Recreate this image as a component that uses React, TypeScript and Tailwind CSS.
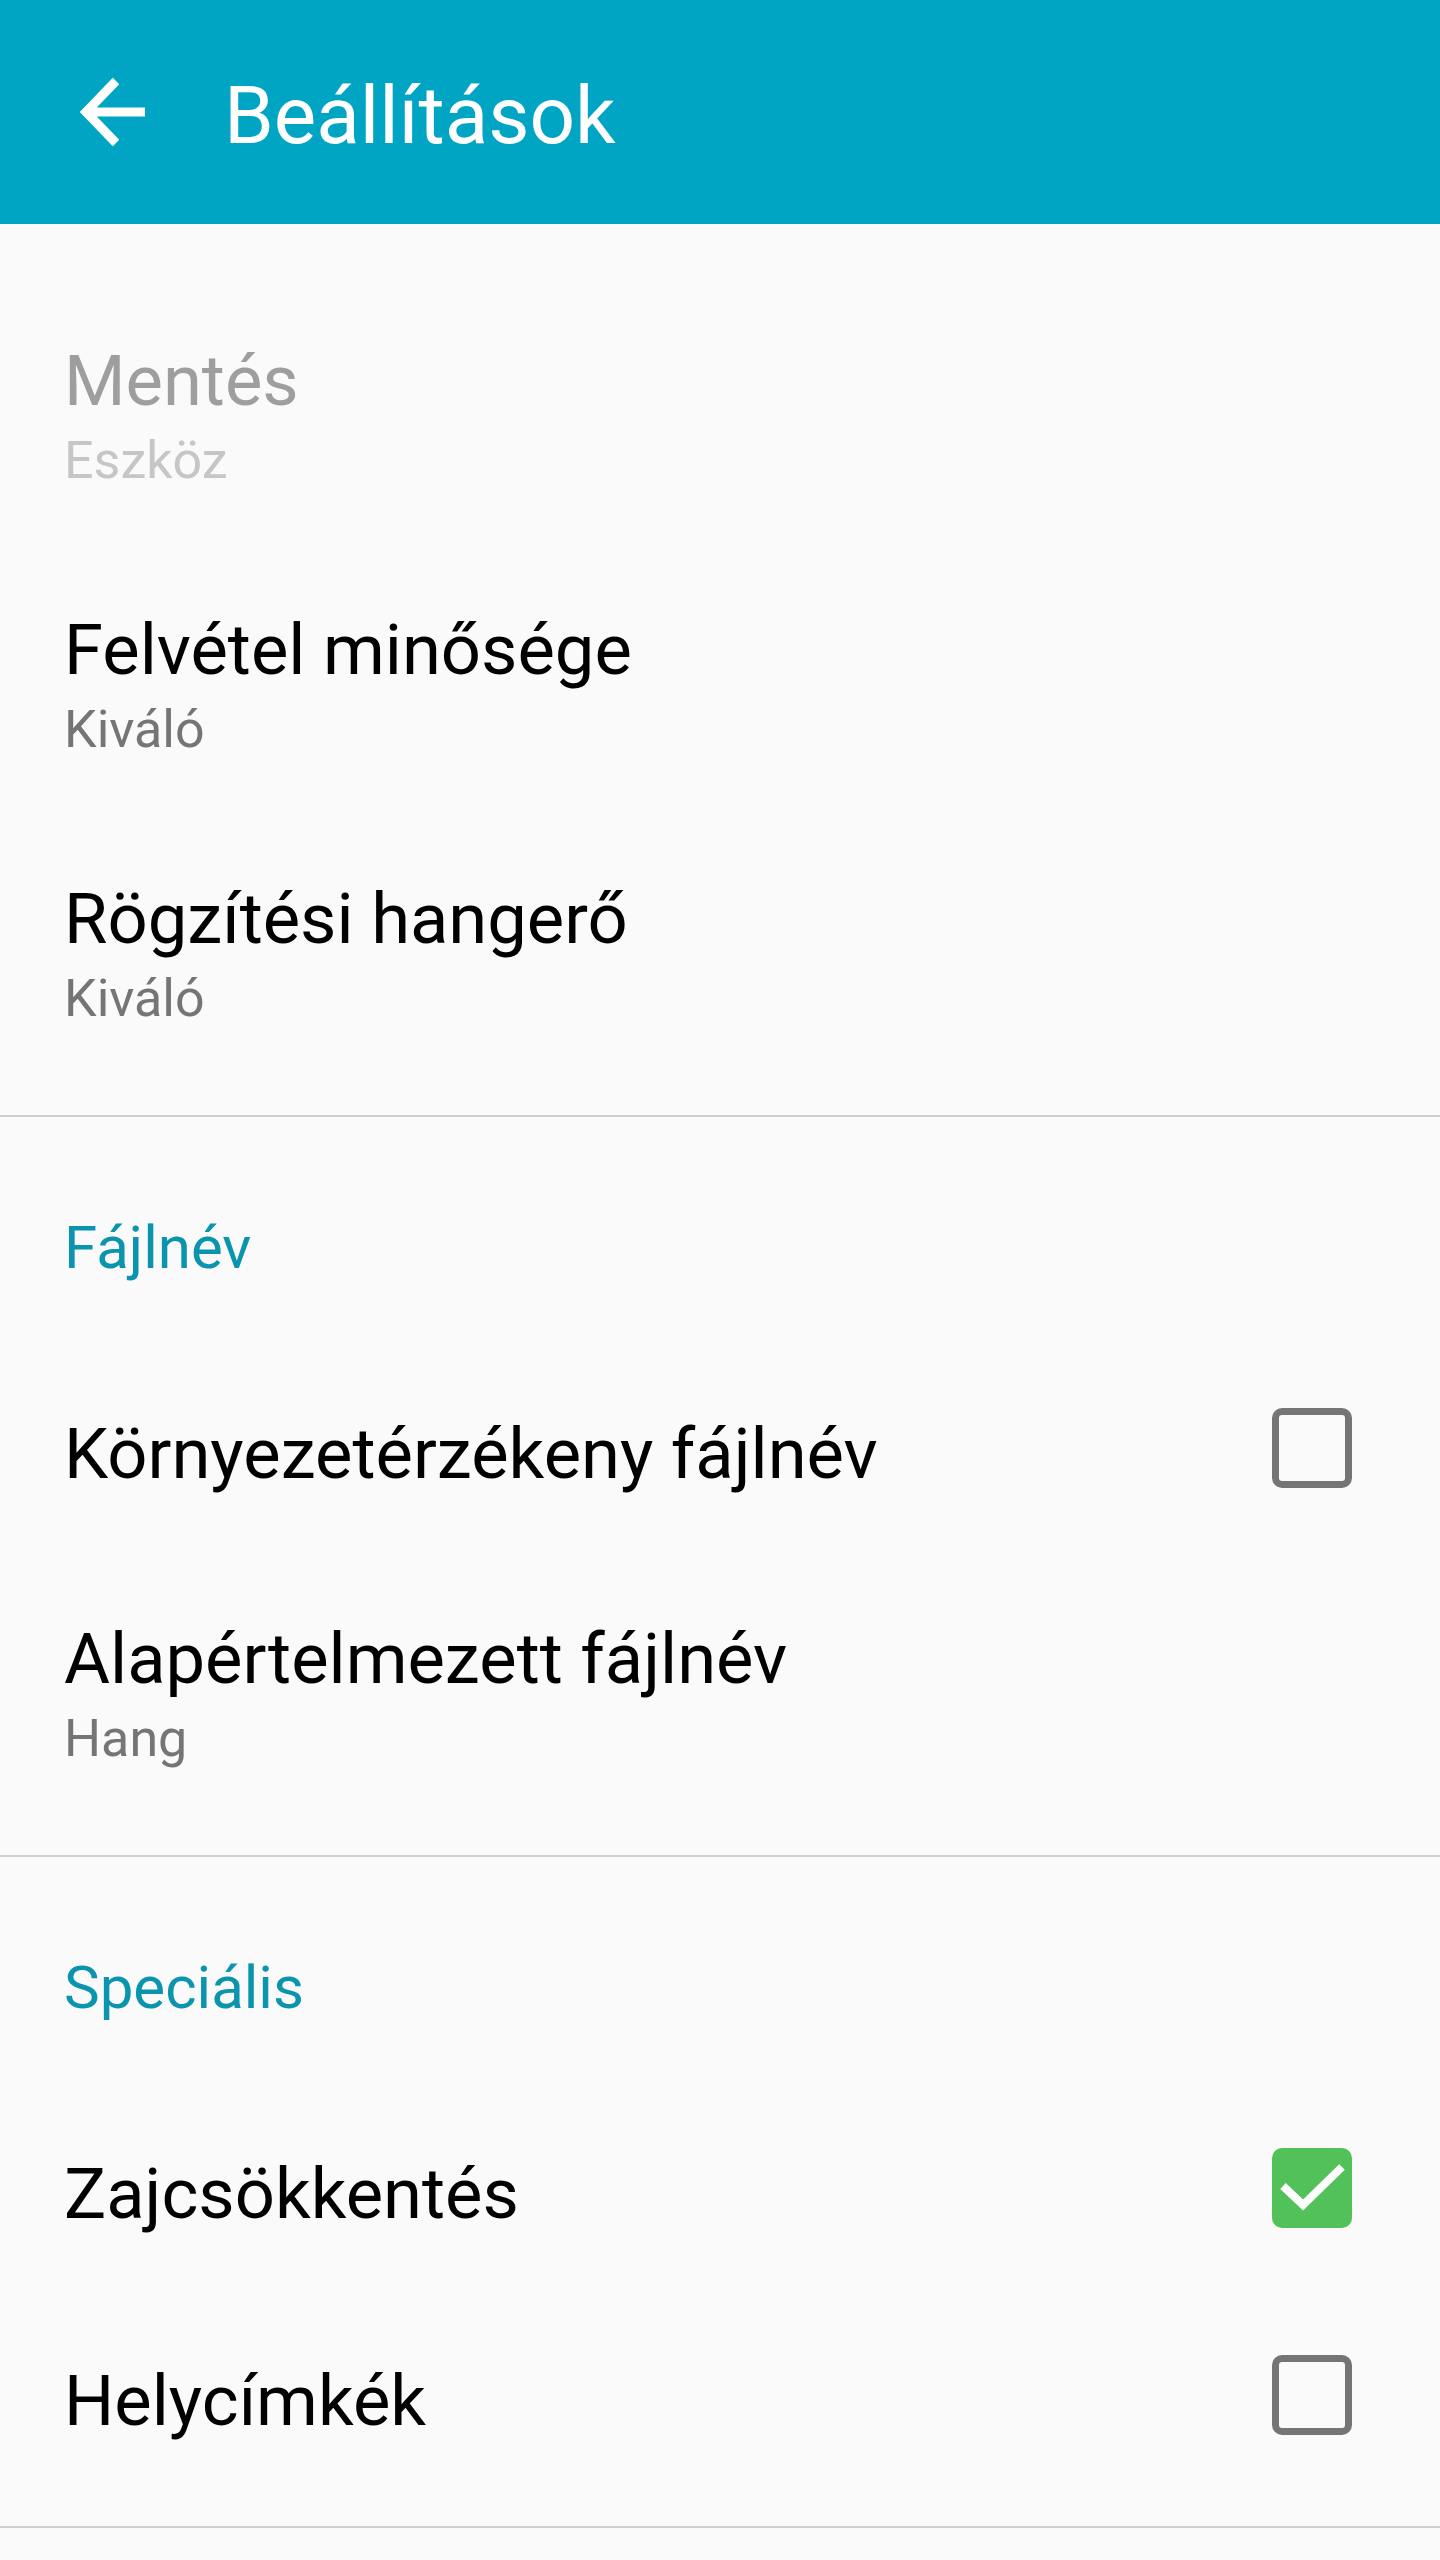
import React from 'react';

function Checkbox({ checked }: { checked?: boolean }) {
  if (checked) {
    return (
      <div className="relative -top-[6px] flex h-[80px] w-[80px] shrink-0 items-center justify-center rounded-[10px] bg-[#52c15a]">
        <svg width="80" height="80" viewBox="0 0 80 80" fill="none">
          <path d="M11 38 L31 57 L70 19" stroke="#ffffff" strokeWidth="8" />
        </svg>
      </div>
    );
  }
  return <div className="relative -top-[6px] h-[80px] w-[80px] shrink-0 rounded-[10px] border-[7px] border-[#757575]" />;
}

function TwoLineRow({ title, sub, disabled }: { title: string; sub: string; disabled?: boolean }) {
  return (
    <div className="pt-[61px] pb-[58px]">
      <div className={`text-[70.5px] leading-[80px] ${disabled ? 'text-[#9e9e9e]' : 'text-black'}`}>{title}</div>
      <div className={`mt-[10px] text-[52px] leading-[60px] ${disabled ? 'text-[#c6c6c6]' : 'text-[#757575]'}`}>{sub}</div>
    </div>
  );
}

function CheckRow({ title, checked }: { title: string; checked?: boolean }) {
  return (
    <div className="flex items-center justify-between pt-[63px] pb-[64px] pr-[88px]">
      <div className="text-[70.5px] leading-[80px] text-black">{title}</div>
      <Checkbox checked={checked} />
    </div>
  );
}

function SectionHeader({ label }: { label: string }) {
  return <div className="pt-[96px] pb-[68px] text-[60px] leading-[70px] text-[#0a94ad]">{label}</div>;
}

export default function App() {
  return (
    <div className="min-h-[2560px] w-[1440px] bg-[#fafafa] font-['Roboto','Noto_Sans',sans-serif]">
      <header className="flex h-[224px] items-center bg-[#00a5c4] pl-[76px]">
        <svg width="72" height="72" viewBox="0 0 72 72" fill="none">
          <path d="M10 36 H69 M40 5 L10 36 L40 67" stroke="#ffffff" strokeWidth="9" />
        </svg>
        <h1 className="ml-[76px] mt-[8px] text-[80px] leading-[80px] text-white">Beállítások</h1>
      </header>

      <section className="pl-[64px] pt-[56px] pb-[28px]">
        <TwoLineRow title="Mentés" sub="Eszköz" disabled />
        <TwoLineRow title="Felvétel minősége" sub="Kiváló" />
        <TwoLineRow title="Rögzítési hangerő" sub="Kiváló" />
      </section>
      <div className="h-[2px] bg-[#cfcfcf]" />

      <section className="pl-[64px] pb-[28px]">
        <SectionHeader label="Fájlnév" />
        <CheckRow title="Környezetérzékeny fájlnév" />
        <TwoLineRow title="Alapértelmezett fájlnév" sub="Hang" />
      </section>
      <div className="h-[2px] bg-[#cfcfcf]" />

      <section className="pl-[64px] pb-[21px]">
        <SectionHeader label="Speciális" />
        <CheckRow title="Zajcsökkentés" checked />
        <CheckRow title="Helycímkék" />
      </section>
      <div className="h-[2px] bg-[#cfcfcf]" />
    </div>
  );
}
